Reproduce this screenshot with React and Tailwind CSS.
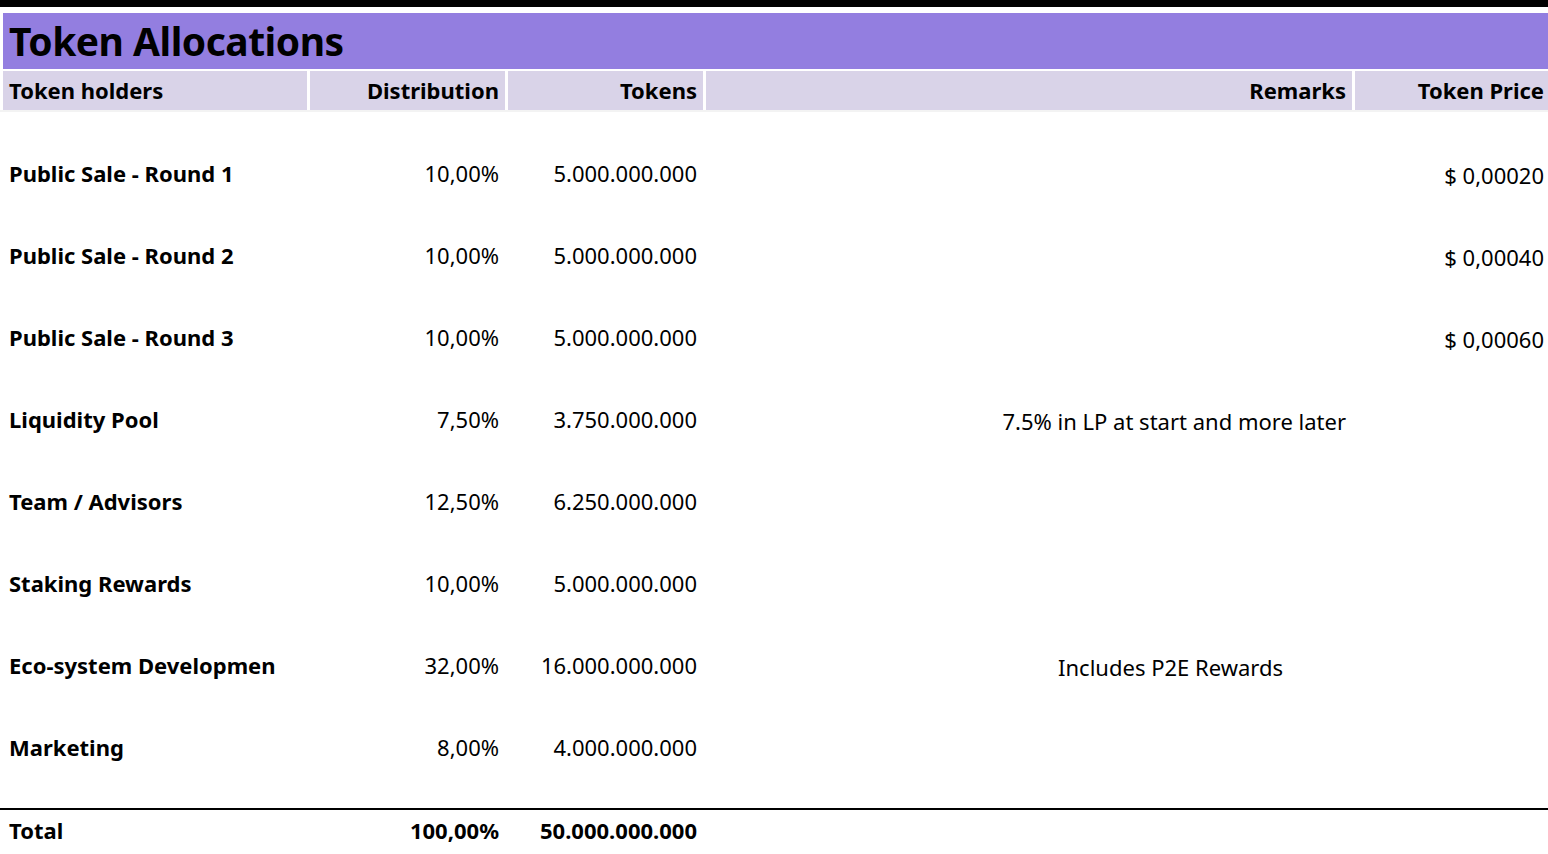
const rows = [
  ['Public Sale - Round 1', '10,00%', '5.000.000.000', '', '$ 0,00020'],
  ['Public Sale - Round 2', '10,00%', '5.000.000.000', '', '$ 0,00040'],
  ['Public Sale - Round 3', '10,00%', '5.000.000.000', '', '$ 0,00060'],
  ['Liquidity Pool', '7,50%', '3.750.000.000', 'lp', ''],
  ['Team / Advisors', '12,50%', '6.250.000.000', '', ''],
  ['Staking Rewards', '10,00%', '5.000.000.000', '', ''],
  ['Eco-system Developmen', '32,00%', '16.000.000.000', 'p2e', ''],
  ['Marketing', '8,00%', '4.000.000.000', '', ''],
]

const cols = 'grid grid-cols-[304px_195px_195px_646px_1fr] gap-x-[3px] pl-[3px]'

export default function App() {
  return (
    <div className="w-[1548px] h-[854px] overflow-hidden bg-white text-black text-[22px] font-['Liberation_Sans',Arial,sans-serif]">
      <div className="h-[7px] bg-black" />
      <div className="h-[6px] bg-white" />
      <div className="ml-[3px] h-[56px] bg-[#937ee0] flex items-center pl-[6px]">
        <h1 className="font-['Lato',sans-serif] font-bold text-[39px] tracking-[-0.5px]">Token Allocations</h1>
      </div>
      <div className={`${cols} mt-[2px] font-bold`}>
        <div className="h-[39px] bg-[#d9d3e8] flex items-center px-[6px]">Token holders</div>
        <div className="h-[39px] bg-[#d9d3e8] flex items-center justify-end px-[6px]">Distribution</div>
        <div className="h-[39px] bg-[#d9d3e8] flex items-center justify-end px-[6px]">Tokens</div>
        <div className="h-[39px] bg-[#d9d3e8] flex items-center justify-end px-[6px]">Remarks</div>
        <div className="h-[39px] bg-[#d9d3e8] flex items-center justify-end pr-[4px]">Token Price</div>
      </div>
      <div className="h-[22px] border-t-2 border-[#f3f3f3]" />
      {rows.map((r) => (
        <div key={r[0]} className={`${cols} h-[82px] items-center`}>
          <div className="font-bold px-[6px] whitespace-nowrap">{r[0]}</div>
          <div className="text-right px-[6px]">{r[1]}</div>
          <div className="text-right px-[6px]">{r[2]}</div>
          <div className="text-right px-[6px] pt-[4px]">
            {r[3] === 'lp' && '7.5% in LP at start and more later'}
            {r[3] === 'p2e' && <span className="mr-[63px]">Includes P2E Rewards</span>}
          </div>
          <div className="text-right pr-[4px] pt-[4px]">{r[4]}</div>
        </div>
      ))}
      <div className="h-[20px]" />
      <div className="border-t-2 border-black" />
      <div className={`${cols} h-[40px] items-center font-bold`}>
        <div className="px-[6px]">Total</div>
        <div className="text-right px-[6px]">100,00%</div>
        <div className="text-right px-[6px]">50.000.000.000</div>
        <div />
        <div />
      </div>
    </div>
  )
}
